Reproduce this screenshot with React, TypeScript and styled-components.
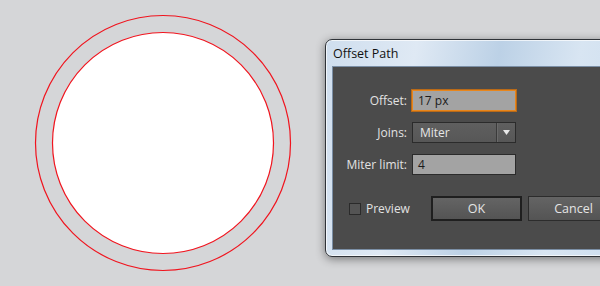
import React, { FC } from 'react';
import styled, { createGlobalStyle } from 'styled-components';

const GlobalStyle = createGlobalStyle`
  html, body {
    margin: 0;
    padding: 0;
    width: 600px;
    height: 286px;
    overflow: hidden;
    background: #d5d6d8;
  }
  body {
    font-family: "Open Sans", "Noto Sans", sans-serif;
  }
`;

const Stage = styled.div`
  display: flex;
  align-items: flex-start;
  width: 600px;
  height: 286px;
  overflow: hidden;
`;

const Canvas = styled.svg`
  display: block;
  flex: 0 0 325px;
  width: 325px;
  height: 286px;
`;

const Window = styled.div`
  flex: 0 0 330px;
  margin-top: 39px;
  height: 218px;
  box-sizing: border-box;
  border: 1px solid #2f3338;
  border-radius: 7px;
  background: linear-gradient(100deg, #cfdeee 0%, #dfe9f4 25%, #bcd1e6 48%, #d8e5f2 70%, #c8dbee 100%);
  box-shadow: 0 2px 10px rgba(0, 0, 0, 0.45), inset 0 0 0 1px rgba(255, 255, 255, 0.7);
  padding: 0 7px 6px 6px;
  display: flex;
  flex-direction: column;
`;

const TitleBar = styled.div`
  height: 26px;
  display: flex;
  align-items: center;
  padding-left: 1px;
  font-size: 12.5px;
  color: #111;
`;

const Body = styled.div`
  flex: 1;
  background: #4b4b4b;
  border: 1px solid #7b8fa6;
  padding-top: 23px;
  display: flex;
  flex-direction: column;
`;

const Form = styled.div`
  display: grid;
  grid-template-columns: 74px 104px;
  column-gap: 5px;
  row-gap: 11px;
  align-items: center;
`;

const Label = styled.label`
  text-align: right;
  font-size: 12px;
  color: #e2e2e2;
`;

const Field = styled.div<{ $focused?: boolean }>`
  height: 21px;
  box-sizing: border-box;
  background: #a3a3a3;
  border: 1px solid ${(p) => (p.$focused ? '#e8861c' : '#2b2b2b')};
  box-shadow: ${(p) => (p.$focused ? '0 0 0 1px #b96a18' : 'none')};
  font-size: 12px;
  color: #1b1b1b;
  padding-left: 5px;
  display: flex;
  align-items: center;
`;

const Select = styled.div`
  height: 21px;
  box-sizing: border-box;
  background: linear-gradient(#5f5f5f, #575757);
  border: 1px solid #2b2b2b;
  display: flex;
  align-items: stretch;
  font-size: 12px;
  color: #e6e6e6;
`;

const SelectValue = styled.div`
  flex: 1;
  display: flex;
  align-items: center;
  padding-left: 7px;
  border-right: 1px solid #3a3a3a;
`;

const SelectArrow = styled.div`
  width: 17px;
  display: flex;
  align-items: center;
  justify-content: center;
  border-left: 1px solid #6a6a6a;
`;

const Footer = styled.div`
  display: flex;
  align-items: center;
  margin-top: 21px;
  padding-left: 16px;
`;

const Check = styled.div`
  display: flex;
  align-items: center;
  gap: 5px;
  font-size: 12px;
  color: #e2e2e2;
  width: 82px;
`;

const Box = styled.span`
  width: 12px;
  height: 12px;
  box-sizing: border-box;
  border: 1px solid #2a2a2a;
  background: #545454;
`;

const Button = styled.button<{ $primary?: boolean }>`
  width: 91px;
  height: 25px;
  box-sizing: border-box;
  margin-right: 6px;
  border: ${(p) => (p.$primary ? '2px solid #1f1f1f' : '1px solid #2c2c2c')};
  background: linear-gradient(#646464, #545454);
  color: #e4e4e4;
  font-family: inherit;
  font-size: 12.5px;
  padding: 0;
`;

const App: FC = () => (
  <>
    <GlobalStyle />
    <Stage>
      <Canvas viewBox="0 0 325 286">
        <circle cx="163" cy="143" r="127.5" fill="none" stroke="#f0141e" strokeWidth="1.2" />
        <circle cx="163" cy="143" r="110.5" fill="#fff" stroke="#f0141e" strokeWidth="1.2" />
      </Canvas>
      <Window>
        <TitleBar>Offset Path</TitleBar>
        <Body>
          <Form>
            <Label>Offset:</Label>
            <Field $focused>17 px</Field>
            <Label>Joins:</Label>
            <Select>
              <SelectValue>Miter</SelectValue>
              <SelectArrow>
                <svg width="7" height="5" viewBox="0 0 7 5">
                  <path d="M0 0H7L3.5 5Z" fill="#e8e8e8" />
                </svg>
              </SelectArrow>
            </Select>
            <Label>Miter limit:</Label>
            <Field>4</Field>
          </Form>
          <Footer>
            <Check>
              <Box />
              Preview
            </Check>
            <Button $primary>OK</Button>
            <Button>Cancel</Button>
          </Footer>
        </Body>
      </Window>
    </Stage>
  </>
);

export default App;
